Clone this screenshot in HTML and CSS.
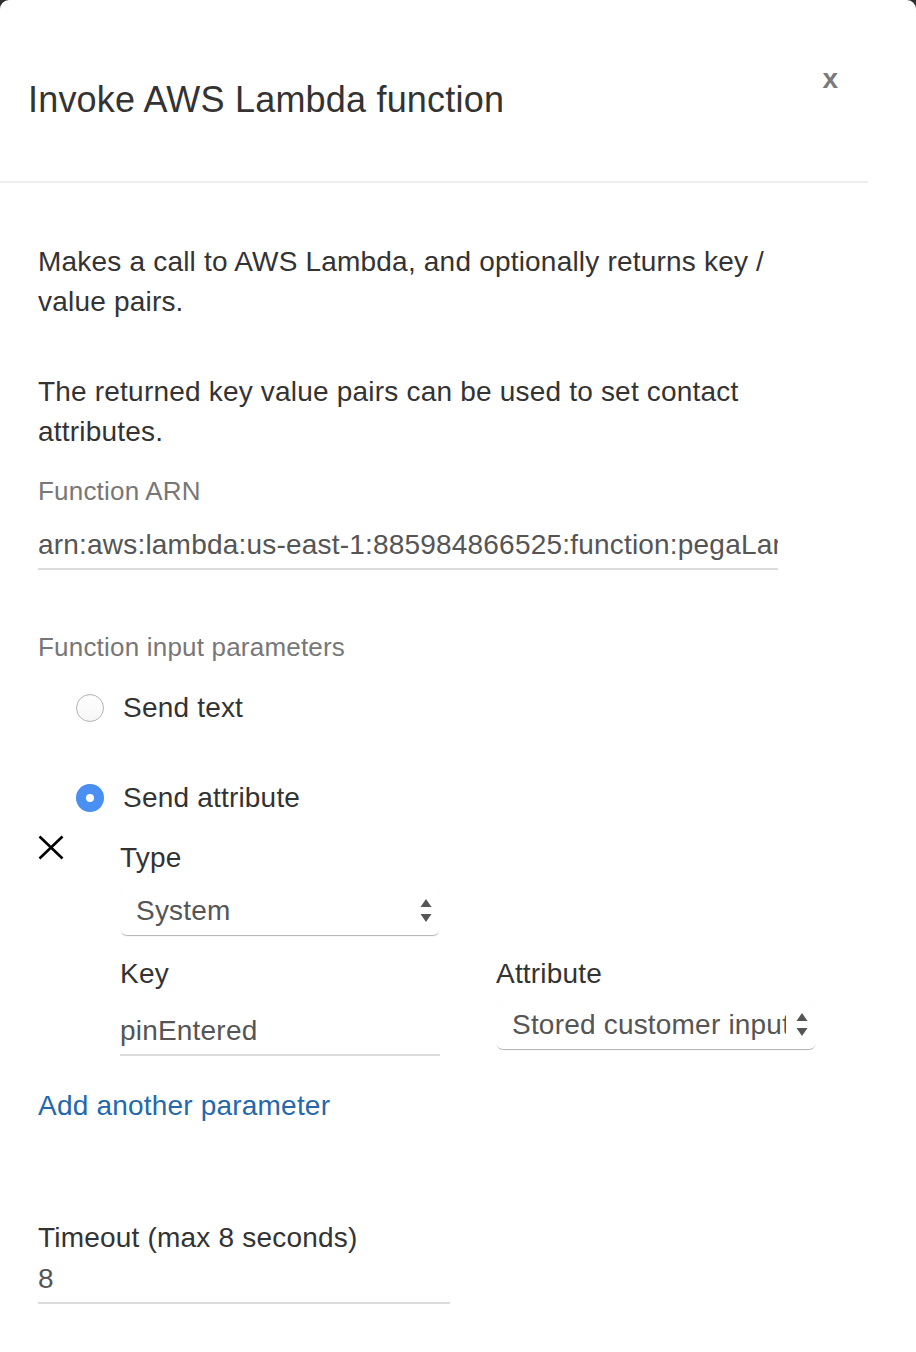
FILE: index.html
```html
<!DOCTYPE html>
<html lang="en">
<head>
<meta charset="utf-8">
<title>Invoke AWS Lambda function</title>
<link rel="stylesheet" href="styles.css">
</head>
<body>
<div class="modal">
  <div class="modal-header">
    <h1 class="title">Invoke AWS Lambda function</h1>
    <button class="close" type="button">x</button>
  </div>
  <div class="modal-body">
    <p class="desc">Makes a call to AWS Lambda, and optionally returns key / value pairs.</p>
    <p class="desc desc-2">The returned key value pairs can be used to set contact attributes.</p>

    <div class="field-label arn-label">Function ARN</div>
    <div class="input input-arn">arn:aws:lambda:us-east-1:885984866525:function:pegaLambda</div>

    <div class="field-label params-label">Function input parameters</div>
    <div class="radio-row row-text">
      <span class="radio"></span>
      <span class="radio-text">Send text</span>
    </div>
    <div class="radio-row row-attr">
      <span class="radio radio-checked"></span>
      <span class="radio-text">Send attribute</span>
    </div>

    <div class="param">
      <svg class="remove" width="26" height="25" viewBox="0 0 26 25" aria-hidden="true">
        <path d="M1.5 1.5 L24.5 23.5 M24.5 1.5 L1.5 23.5" stroke="#000" stroke-width="2.6" fill="none"/>
      </svg>
      <div class="param-grid">
        <div class="cell cell-type">
          <div class="dark-label">Type</div>
          <div class="select select-type">
            <span class="select-text">System</span>
            <svg class="arrows" width="12" height="26" viewBox="0 0 12 26" aria-hidden="true">
              <path d="M6 1 L11.5 9 L0.5 9 Z M0.5 16 L11.5 16 L6 24 Z" fill="#555"/>
            </svg>
          </div>
        </div>
        <div class="cell cell-key">
          <div class="dark-label">Key</div>
          <div class="input input-key">pinEntered</div>
        </div>
        <div class="cell cell-attr">
          <div class="dark-label">Attribute</div>
          <div class="select select-attr">
            <span class="select-text clip">Stored customer input</span>
            <svg class="arrows" width="12" height="26" viewBox="0 0 12 26" aria-hidden="true">
              <path d="M6 1 L11.5 9 L0.5 9 Z M0.5 16 L11.5 16 L6 24 Z" fill="#555"/>
            </svg>
          </div>
        </div>
      </div>
    </div>

    <a class="add-link" href="#">Add another parameter</a>

    <div class="dark-label timeout-label">Timeout (max 8 seconds)</div>
    <div class="input input-timeout">8</div>
  </div>
</div>
</body>
</html>
```

FILE: styles.css
```css
html, body {
  margin: 0;
  padding: 0;
}

body {
  background: #2e2e2e;
  font-family: "Liberation Sans", Helvetica, Arial, sans-serif;
  color: #333;
  letter-spacing: 0.2px;
}

.modal {
  width: 916px;
  min-height: 1352px;
  background: #fff;
  border-radius: 9px 9px 0 0;
}

.modal-header {
  box-sizing: border-box;
  width: 868px;
  height: 183px;
  border-bottom: 2px solid #eeeeee;
  display: flex;
  justify-content: space-between;
  align-items: flex-start;
  padding: 65px 30px 0 28px;
}

.title {
  margin: 15px 0 0 0;
  font-size: 36px;
  line-height: 40px;
  font-weight: normal;
  color: #333;
}

.close {
  border: 0;
  background: none;
  padding: 0;
  margin: 0;
  font-family: "Liberation Sans", Helvetica, Arial, sans-serif;
  font-size: 28px;
  line-height: 28px;
  font-weight: bold;
  color: #7a7a7a;
  cursor: pointer;
}

.modal-body {
  padding: 59px 0 40px 38px;
  font-size: 28px;
  line-height: 40px;
}

.desc {
  margin: 0;
  width: 770px;
  color: #333;
}

.desc-2 {
  margin-top: 50px;
}

.field-label {
  font-size: 26px;
  line-height: 36px;
  color: #777;
}

.arn-label {
  margin-top: 21px;
}

.input {
  box-sizing: border-box;
  height: 45px;
  line-height: 40px;
  padding-bottom: 3px;
  border-bottom: 2px solid #dcdcdc;
  color: #555;
  white-space: nowrap;
  overflow: hidden;
}

.input-arn {
  width: 740px;
  margin-top: 16px;
}

.params-label {
  margin-top: 59px;
}

.radio-row {
  display: flex;
  align-items: center;
  height: 40px;
  padding-left: 38px;
  gap: 19px;
}

.row-text {
  margin-top: 23px;
}

.row-attr {
  margin-top: 50px;
}

.radio {
  box-sizing: border-box;
  width: 28px;
  height: 28px;
  border-radius: 50%;
  border: 1px solid #b5b5b5;
  background: linear-gradient(#ffffff, #f6f6f6);
  box-shadow: inset 0 1px 1px rgba(0, 0, 0, 0.04);
  flex: none;
}

.radio-checked {
  border: 0;
  background: #4a8ff2;
  position: relative;
}

.radio-checked::after {
  content: "";
  position: absolute;
  left: 10px;
  top: 10px;
  width: 8px;
  height: 8px;
  border-radius: 50%;
  background: #fff;
}

.radio-text {
  color: #333;
}

.param {
  display: flex;
  align-items: flex-start;
  margin-top: 20px;
}

.remove {
  flex: none;
  margin-top: -3px;
  margin-right: 56px;
}

.param-grid {
  display: grid;
  grid-template-columns: 320px 320px;
  column-gap: 56px;
  align-items: start;
}

.cell-type {
  grid-column: 1;
  grid-row: 1;
}

.cell-key {
  grid-column: 1;
  grid-row: 2;
  margin-top: 19px;
}

.cell-attr {
  grid-column: 2;
  grid-row: 2;
  margin-top: 19px;
}

.dark-label {
  color: #333;
  line-height: 40px;
}

.select {
  box-sizing: border-box;
  display: flex;
  align-items: center;
  justify-content: space-between;
  height: 48px;
  padding: 0 8px 0 16px;
  border-radius: 7px;
  background: #fff;
  box-shadow: 0 2px 1px -1px rgba(0, 0, 0, 0.3), 0 0 1px rgba(0, 0, 0, 0.06);
  color: #555;
  white-space: nowrap;
}

.select-type {
  margin-top: 9px;
}

.select-attr {
  margin-top: 7px;
}

.select-text {
  line-height: 40px;
}

.clip {
  display: block;
  width: 274px;
  overflow: hidden;
}

.arrows {
  flex: none;
}

.input-key {
  margin-top: 17px;
}

.add-link {
  display: block;
  width: max-content;
  margin-top: 30px;
  color: #2468ac;
  text-decoration: none;
  line-height: 40px;
}

.timeout-label {
  margin-top: 92px;
}

.input-timeout {
  width: 412px;
  margin-top: 1px;
}
```
